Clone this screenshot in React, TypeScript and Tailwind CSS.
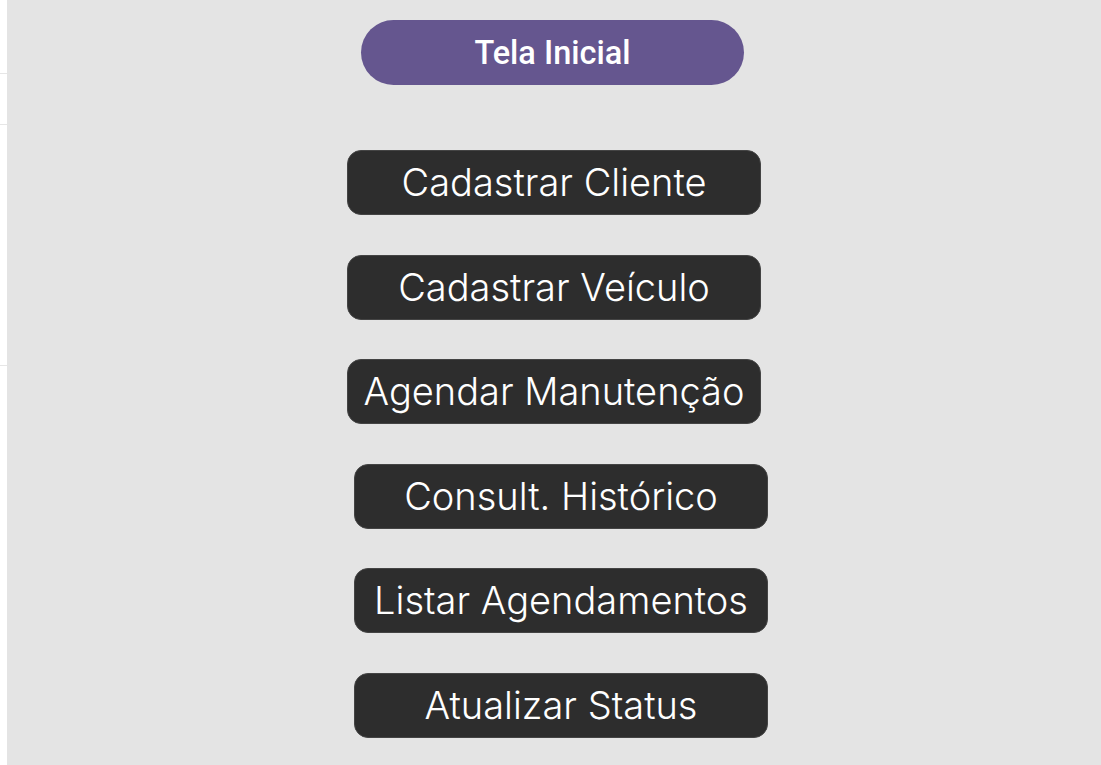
export default function App() {
  const dark = [
    { label: "Cadastrar Cliente", shift: false },
    { label: "Cadastrar Veículo", shift: false },
    { label: "Agendar Manutenção", shift: false },
    { label: "Consult. Histórico", shift: true },
    { label: "Listar Agendamentos", shift: true },
    { label: "Atualizar Status", shift: true },
  ];
  return (
    <div className="flex h-[765px] w-[1101px] bg-white overflow-hidden">
      <div className="relative w-[7px] shrink-0 bg-white">
        <div className="absolute left-0 top-[73px] h-px w-[7px] bg-[#e6e6e6]" />
        <div className="absolute left-0 top-[124px] h-px w-[7px] bg-[#e6e6e6]" />
        <div className="absolute left-0 top-[365px] h-px w-[7px] bg-[#e6e6e6]" />
      </div>
      <div className="flex h-[765px] flex-1 flex-col items-start bg-[#e4e4e4] pl-[340px] pt-[20px]">
        <div
          className="ml-[14px] flex h-[65px] w-[383px] items-center justify-center rounded-full bg-[#65568f] pt-[2px] text-[32.5px] font-medium text-white"
          style={{ fontFamily: "Roboto, sans-serif" }}
        >
          Tela Inicial
        </div>
        <div className="mt-[65px] flex flex-col gap-[39.6px]">
          {dark.map((b) => (
            <div
              key={b.label}
              className={`flex h-[65px] w-[414px] items-center justify-center rounded-[14px] border border-[#444444] bg-[#2d2d2d] text-[38px] font-light text-white ${b.shift ? "ml-[7px]" : ""}`}
              style={{ fontFamily: "Inter, sans-serif" }}
            >
              {b.label}
            </div>
          ))}
        </div>
      </div>
    </div>
  );
}
